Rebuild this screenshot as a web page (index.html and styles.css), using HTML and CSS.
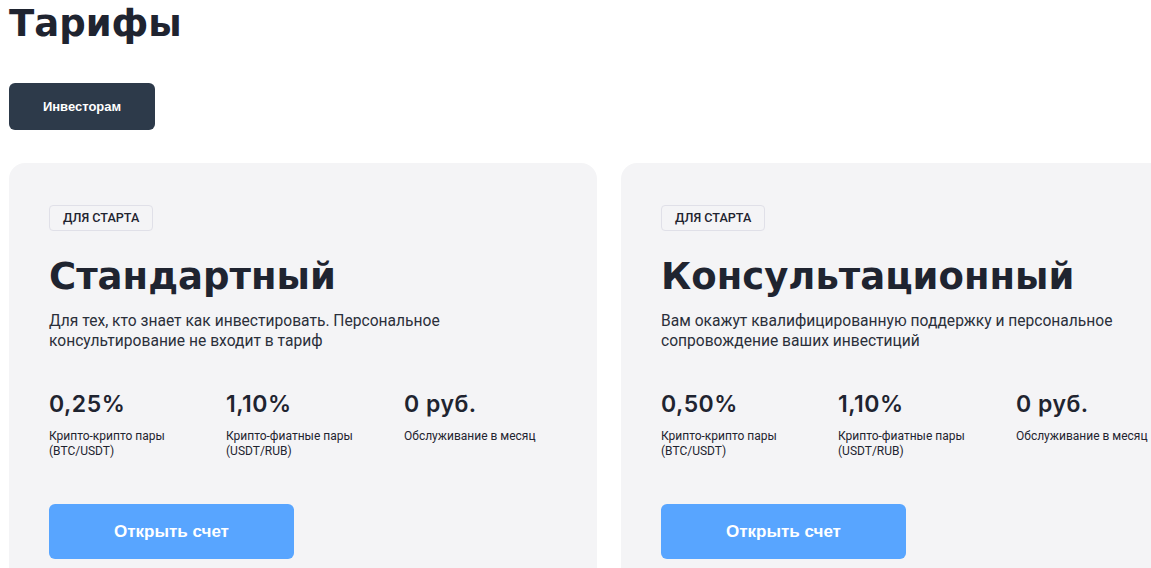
FILE: index.html
```html
<!DOCTYPE html>
<html lang="ru">
<head>
    <meta charset="UTF-8">
    <meta name="viewport" content="width=device-width, initial-scale=1.0">
    <title>Тарифы</title>
    <link rel="stylesheet" href="styles.css">
</head>
<body>
    <div class="page">
        <h1>Тарифы</h1>

        <div class="tabs">
            <button class="tab active">Инвесторам</button>
        </div>

        <div class="plans">
            <div class="plan-card">
                <span class="badge">Для старта</span>
                <h2>Стандартный</h2>
                <p class="plan-desc">Для тех, кто знает как инвестировать. Персональное<br>консультирование не входит в тариф</p>
                <div class="stats">
                    <div class="stat">
                        <div class="value">0,25%</div>
                        <div class="label">Крипто-крипто пары<br>(BTC/USDT)</div>
                    </div>
                    <div class="stat">
                        <div class="value">1,10%</div>
                        <div class="label">Крипто-фиатные пары<br>(USDT/RUB)</div>
                    </div>
                    <div class="stat">
                        <div class="value">0 руб.</div>
                        <div class="label">Обслуживание в месяц</div>
                    </div>
                </div>
                <button class="open-btn">Открыть счет</button>
            </div>

            <div class="plan-card">
                <span class="badge">Для старта</span>
                <h2>Консультационный</h2>
                <p class="plan-desc">Вам окажут квалифицированную поддержку и персональное<br>сопровождение ваших инвестиций</p>
                <div class="stats">
                    <div class="stat">
                        <div class="value">0,50%</div>
                        <div class="label">Крипто-крипто пары<br>(BTC/USDT)</div>
                    </div>
                    <div class="stat">
                        <div class="value">1,10%</div>
                        <div class="label">Крипто-фиатные пары<br>(USDT/RUB)</div>
                    </div>
                    <div class="stat">
                        <div class="value">0 руб.</div>
                        <div class="label">Обслуживание в месяц</div>
                    </div>
                </div>
                <button class="open-btn">Открыть счет</button>
            </div>
        </div>
    </div>
</body>
</html>
```

FILE: styles.css
```css
html, body {
    margin: 0;
    padding: 0;
    background: #fff;
    overflow: hidden;
}

body {
    font-family: Roboto, 'Noto Sans', sans-serif;
    color: #1f2430;
}

.page {
    padding: 0 0 0 9px;
}

h1 {
    font-family: 'DejaVu Sans', Inter, sans-serif;
    font-size: 37px;
    font-weight: bold;
    line-height: 48px;
    margin: 0;
    color: #1f2430;
}

.tabs {
    margin-top: 35px;
    display: flex;
}

.tab {
    width: 146px;
    height: 47px;
    border: none;
    border-radius: 6px;
    background: #2d3a4a;
    color: #fff;
    font-family: 'Liberation Sans', Arial, sans-serif;
    font-size: 13px;
    font-weight: bold;
    cursor: pointer;
}

.plans {
    display: flex;
    gap: 24px;
    margin-top: 33px;
}

.plan-card {
    flex: 0 0 588px;
    box-sizing: border-box;
    background: #f4f4f6;
    border-radius: 16px;
    padding: 42px 40px 40px;
    height: 440px;
}

.badge {
    display: inline-block;
    box-sizing: border-box;
    height: 26px;
    line-height: 24px;
    padding: 0 13px;
    border: 1px solid #e0e0e8;
    border-radius: 4px;
    font-size: 12.6px;
    font-weight: 500;
    text-transform: uppercase;
    color: #1f2430;
}

.plan-card h2 {
    font-family: 'DejaVu Sans', Inter, sans-serif;
    font-size: 37px;
    font-weight: bold;
    line-height: 48px;
    margin: 22px 0 0;
}

.plan-desc {
    font-size: 15.6px;
    line-height: 20px;
    margin: 10px 0 0;
    color: #2a2f3a;
}

.stats {
    display: grid;
    grid-template-columns: 177px 178px 1fr;
    margin-top: 39px;
}

.stat .value {
    font-family: Inter, 'Noto Sans', sans-serif;
    font-size: 23px;
    font-weight: 600;
    letter-spacing: 0.5px;
    line-height: 28px;
}

.stat .label {
    font-size: 12px;
    line-height: 15px;
    margin-top: 11px;
    color: #1f2430;
}

.open-btn {
    display: block;
    width: 245px;
    height: 55px;
    margin-top: 45px;
    border: none;
    border-radius: 6px;
    background: #58a5ff;
    color: #fff;
    font-family: 'Liberation Sans', Arial, sans-serif;
    font-size: 17px;
    font-weight: bold;
    cursor: pointer;
}
```
